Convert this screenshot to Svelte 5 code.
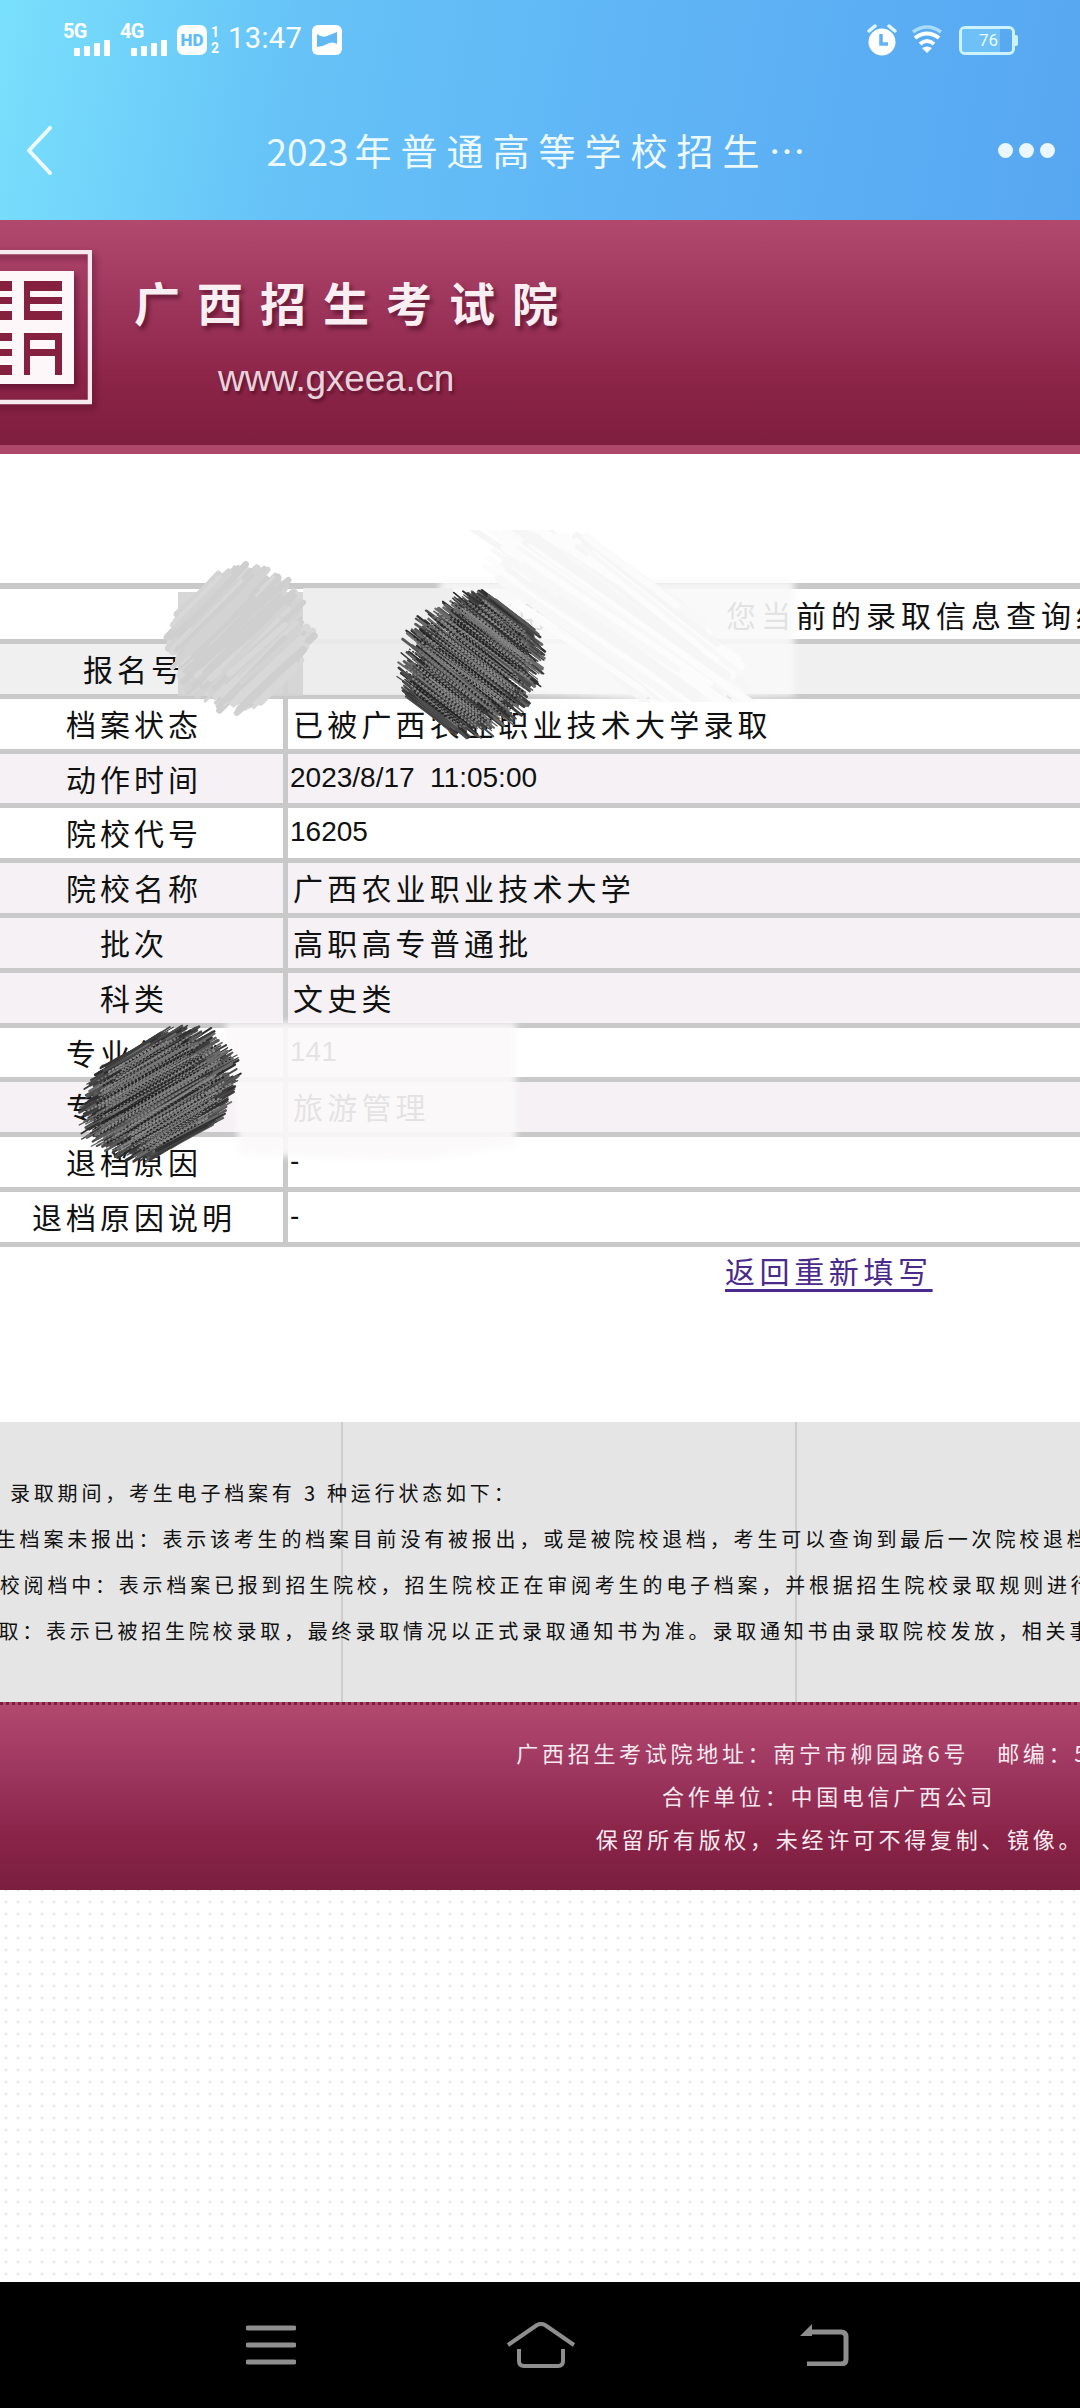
<script>
  const rows = [
    { label: '报名号', value: '', tint: 'grey' },
    { label: '档案状态', value: '已被广西农业职业技术大学录取' },
    { label: '动作时间', value: '2023/8/17  11:05:00', num: true, tint: 'pink' },
    { label: '院校代号', value: '16205', num: true },
    { label: '院校名称', value: '广西农业职业技术大学', tint: 'pink' },
    { label: '批次', value: '高职高专普通批', tint: 'pink' },
    { label: '科类', value: '文史类', tint: 'pink' },
    { label: '专业代号', value: '141', num: true },
    { label: '专业名称', value: '旅游管理', tint: 'pink' },
    { label: '退档原因', value: '-', num: true },
    { label: '退档原因说明', value: '-', num: true }
  ];

  const notes = [
    { cls: 'n1', text: '录取期间，考生电子档案有 3 种运行状态如下：' },
    { cls: 'n2', text: '考生档案未报出：表示该考生的档案目前没有被报出，或是被院校退档，考生可以查询到最后一次院校退档' },
    { cls: 'n3', text: '院校阅档中：表示档案已报到招生院校，招生院校正在审阅考生的电子档案，并根据招生院校录取规则进行' },
    { cls: 'n4', text: '院校录取：表示已被招生院校录取，最终录取情况以正式录取通知书为准。录取通知书由录取院校发放，相关事宜' }
  ];

  // pen marks that hide personal data on the original
  function scribble({ cx, cy, angle, len, spread, count, seed, colors, minW, maxW, dash = '' }) {
    let s = seed;
    const rnd = () => {
      s = (s + 0x6d2b79f5) | 0;
      let t = Math.imul(s ^ (s >>> 15), 1 | s);
      t = (t + Math.imul(t ^ (t >>> 7), 61 | t)) ^ t;
      return ((t ^ (t >>> 14)) >>> 0) / 4294967296;
    };
    const a = (angle * Math.PI) / 180;
    const out = [];
    for (let i = 0; i < count; i++) {
      const k = rnd() * 2 - 1;
      const half = len * Math.sqrt(1 - k * k * 0.8) * (0.55 + rnd() * 0.5);
      const shift = (rnd() - 0.5) * len * 0.3;
      const tilt = a + (rnd() - 0.5) * 0.1;
      const mx = cx - Math.sin(a) * spread * k + Math.cos(a) * shift;
      const my = cy + Math.cos(a) * spread * k + Math.sin(a) * shift;
      out.push({
        x1: mx - Math.cos(tilt) * half,
        y1: my - Math.sin(tilt) * half,
        x2: mx + Math.cos(tilt) * half,
        y2: my + Math.sin(tilt) * half,
        w: minW + rnd() * (maxW - minW),
        c: colors[Math.floor(rnd() * colors.length)],
        dash
      });
    }
    return out;
  }

  const dark = ['#2f2f2f', '#3d3d3d', '#4c4c4c', '#5a5a5a', '#6a6a6a'];
  const grain = ['#8c8c8c', '#777777', '#222222'];
  const greys = ['#cfcfcf', '#d3d3d3', '#d8d8d8'];
  const pale = ['#fbfbfb', '#fcfcfc', '#f8f8f8', '#f6f6f6'];

  const paleMarks = scribble({ cx: 620, cy: 622, angle: 36, len: 150, spread: 48, count: 110, seed: 5, colors: pale, minW: 4, maxW: 10 });

  const marks = [
    ...scribble({ cx: 240, cy: 638, angle: -44, len: 66, spread: 60, count: 240, seed: 11, colors: greys, minW: 3, maxW: 8 }),
    ...scribble({ cx: 472, cy: 664, angle: 38, len: 62, spread: 66, count: 520, seed: 23, colors: dark, minW: 1, maxW: 3 }),
    ...scribble({ cx: 472, cy: 664, angle: 38, len: 56, spread: 58, count: 200, seed: 29, colors: grain, minW: 1, maxW: 2, dash: '1 3' }),
    ...scribble({ cx: 160, cy: 1094, angle: -30, len: 76, spread: 52, count: 560, seed: 37, colors: dark, minW: 1, maxW: 3 }),
    ...scribble({ cx: 160, cy: 1094, angle: -30, len: 68, spread: 45, count: 200, seed: 41, colors: grain, minW: 1, maxW: 2, dash: '1 3' })
  ];
</script>

<div class="screen">
  <header class="top">
    <div class="status">
      <div class="sig">
        <span class="net">5G</span>
        <svg width="36" height="16" viewBox="0 0 36 16"><rect x="0" y="8" width="6" height="8" rx="1" /><rect x="10" y="6" width="6" height="10" rx="1" /><rect x="20" y="3" width="6" height="13" rx="1" /><rect x="30" y="0" width="6" height="16" rx="1" /></svg>
      </div>
      <div class="sig">
        <span class="net">4G</span>
        <svg width="36" height="16" viewBox="0 0 36 16"><rect x="0" y="8" width="6" height="8" rx="1" /><rect x="10" y="6" width="6" height="10" rx="1" /><rect x="20" y="3" width="6" height="13" rx="1" /><rect x="30" y="0" width="6" height="16" rx="1" /></svg>
      </div>
      <span class="hd">HD</span>
      <span class="sims"><b>1</b><b>2</b></span>
      <span class="clock">13:47</span>
      <svg class="msg" width="30" height="30" viewBox="0 0 30 30">
        <rect width="30" height="30" rx="6" fill="#fff" />
        <path d="M5 9 Q10 13 15 11 T25 7 V19 Q20 16 15 19 T5 22 Z" fill="#62b8f4" />
      </svg>
      <div class="status-right">
        <svg width="30" height="32" viewBox="0 0 30 32">
          <circle cx="15" cy="18" r="13.5" fill="#fff" />
          <path d="M2 7 L8 2 M28 7 L22 2" stroke="#dff6ff" stroke-width="3.5" stroke-linecap="round" />
          <path d="M14 10 V20 H21" fill="none" stroke="#5fb2f4" stroke-width="3.5" />
        </svg>
        <svg width="32" height="30" viewBox="0 0 32 30" fill="none" stroke-linecap="butt">
          <path d="M2 7 Q16 -3 30 7" stroke="#a9dcfb" stroke-width="3.5" />
          <path d="M4 13 Q16 4 28 13" stroke="#fff" stroke-width="4" />
          <path d="M9 19 Q16 13 23 19" stroke="#fff" stroke-width="4" />
          <path d="M16 28 L11 23 Q16 20 21 23 Z" fill="#fff" />
        </svg>
        <div class="batt">
          <div class="batt-box"><div class="batt-fill"></div><span>76</span></div>
          <div class="batt-nub"></div>
        </div>
      </div>
    </div>
    <div class="nav">
      <svg class="back" width="27" height="49" viewBox="0 0 27 49"><path d="M24 2 L3 24.5 L24 47" fill="none" stroke="#eefbff" stroke-width="4" stroke-linecap="round" stroke-linejoin="round" /></svg>
      <h1 class="title"><span class="digits">2023</span>年普通高等学校招生…</h1>
      <div class="dots"><i></i><i></i><i></i></div>
    </div>
  </header>

  <div class="site">
    <div class="banner">
      <svg class="logo" width="106" height="156" viewBox="0 0 106 156">
        <path d="M0 2 H104 V152 H0" fill="none" stroke="#f6e9ee" stroke-width="4.5" />
        <rect x="0" y="21" width="88" height="113" fill="#fdf7f9" />
        <path d="M38 31 H76 V41 H44 V47 H76 V54 H44 V61 H76 V70 H38 Z" fill="#85213f" />
        <path d="M38 83 H76 V125 H69 V106 H44 V125 H38 Z M44 90 V99 H69 V90 Z" fill="#85213f" fill-rule="evenodd" />
        <path d="M0 31 H26 V41 H6 V47 H26 V54 H6 V61 H26 V70 H0 Z M0 83 H26 V91 H0 Z M0 99 H26 V106 H0 Z M0 115 H26 V125 H0 Z" fill="#85213f" />
      </svg>
      <div class="brand">
        <div class="brand-name">广西招生考试院</div>
        <div class="brand-url">www.gxeea.cn</div>
      </div>
    </div>

    <div class="table">
      <div class="notice">用户，您好，您当前的录取信息查询结果如下</div>
      {#each rows as row}
        <div class="row {row.tint ?? ''}">
          <div class="label">{row.label}</div>
          <div class="value" class:num={row.num}>{row.value}</div>
        </div>
      {/each}
    </div>

    <div class="again"><span class="link">返回重新填写</span></div>

    <div class="notes">
      {#each notes as note}
        <p class={note.cls}>{note.text}</p>
      {/each}
    </div>

    <footer class="foot">
      <p class="f1">广西招生考试院地址：南宁市柳园路6号<span class="gap"></span>邮编：530022</p>
      <p>合作单位：中国电信广西公司</p>
      <p class="f3">保留所有版权，未经许可不得复制、镜像。</p>
    </footer>

    <div class="pattern"></div>
  </div>

  <div class="navbar">
    <svg width="50" height="40" viewBox="0 0 50 40"><path d="M2 3 H48 M2 20 H48 M2 37 H48" stroke="#8e8e8e" stroke-width="5" stroke-linecap="round" /></svg>
    <svg width="70" height="46" viewBox="0 0 70 46" fill="none" stroke="#8e8e8e" stroke-width="4">
      <path d="M2 23 L31 3 Q35 1 39 3 L68 23" stroke-linejoin="round" />
      <path d="M13 27 V39 Q13 44 18 44 H52 Q57 44 57 39 V27" />
    </svg>
    <svg class="nav-back" width="50" height="42" viewBox="0 0 50 42" fill="none" stroke="#8e8e8e" stroke-width="5">
      <path d="M12 8 H42 Q47 8 47 13 V35 Q47 40 42 40 H8" />
      <path d="M13 0 V12 H1 Z" fill="#8e8e8e" stroke="none" />
    </svg>
  </div>

  <svg class="marks" width="1080" height="2408" viewBox="0 0 1080 2408">
    <defs>
      <clipPath id="pale-clip"><rect x="303" y="530" width="490" height="172" /></clipPath>
    </defs>
    <!-- erased strokes around the first redaction -->
    <polygon class="soft" points="440,580 794,580 794,696 640,700 520,692 430,698" fill="#f9f9f9" opacity="0.9" />
    <g clip-path="url(#pale-clip)">
      {#each paleMarks as m}
        <line x1={m.x1} y1={m.y1} x2={m.x2} y2={m.y2} stroke={m.c} stroke-width={m.w} stroke-linecap="round" />
      {/each}
    </g>
    <rect x="303" y="588" width="150" height="107" fill="#ececec" opacity="0.9" />
    <rect x="178" y="592" width="125" height="104" fill="#d3d3d3" opacity="0.9" />
    <!-- erased strokes on the second one -->
    <polygon class="soft" points="225,1022 516,1022 516,1145 420,1160 240,1155" fill="#fbf9fa" opacity="0.9" />
    {#each marks as m}
      <line x1={m.x1} y1={m.y1} x2={m.x2} y2={m.y2} stroke={m.c} stroke-width={m.w} stroke-dasharray={m.dash} stroke-linecap="round" />
    {/each}
  </svg>
</div>

<style>
  :global(body) {
    margin: 0;
    background: #fff;
  }

  .screen {
    position: relative;
    width: 1080px;
    height: 2408px;
    overflow: hidden;
    display: flex;
    flex-direction: column;
    font-family: "Noto Sans CJK SC", "Noto Sans", sans-serif;
    color: #111;
  }

  /* phone chrome */
  .top {
    height: 220px;
    flex: none;
    background: linear-gradient(100deg, #79e0fc 0%, #66c2f7 28%, #5fb4f5 60%, #56a7f1 100%);
    color: #fff;
  }

  .status {
    height: 80px;
    display: flex;
    align-items: center;
    padding: 0 62px 0 63px;
  }

  .sig {
    width: 57px;
    height: 32px;
    display: flex;
    flex-direction: column;
    align-items: flex-end;
    position: relative;
    justify-content: flex-end;
  }

  .sig svg {
    fill: #fff;
    margin-right: 10px;
  }

  .net {
    position: absolute;
    left: 0;
    top: -3px;
    font: 700 20px/20px Roboto, sans-serif;
    letter-spacing: -0.8px;
  }

  .hd {
    width: 30px;
    height: 30px;
    background: #fff;
    color: #5fbcf5;
    border-radius: 7px;
    font: 900 17px/30px Roboto, sans-serif;
    text-align: center;
  }

  .sims {
    display: flex;
    flex-direction: column;
    justify-content: space-between;
    height: 30px;
    margin: 0 9px 0 4px;
  }

  .sims b {
    font: 700 14px/14px Roboto, sans-serif;
  }

  .clock {
    font: 400 29px/30px Roboto, sans-serif;
    letter-spacing: 0.4px;
    margin: -5px 10px 0 0;
  }

  .status-right {
    margin-left: auto;
    display: flex;
    align-items: center;
    gap: 14px;
  }

  .batt {
    display: flex;
    align-items: center;
    margin-left: 2px;
  }

  .batt-box {
    position: relative;
    width: 56px;
    height: 29px;
    box-sizing: border-box;
    border: 3px solid #ccf3fc;
    border-radius: 6px;
    overflow: hidden;
    background: #59a9f0;
  }

  .batt-fill {
    width: 76%;
    height: 100%;
    background: #70c0f8;
  }

  .batt-box span {
    position: absolute;
    left: 17px;
    top: 1px;
    font: 400 17px/21px Roboto, sans-serif;
    color: #e8fbff;
  }

  .batt-nub {
    width: 3px;
    height: 11px;
    background: #ccf3fc;
    border-radius: 0 2px 2px 0;
  }

  .nav {
    height: 140px;
    display: grid;
    grid-template-columns: 1fr auto 1fr;
    align-items: center;
    padding: 0 25px 0 26px;
  }

  .title {
    margin: 0;
    font-size: 37px;
    font-weight: 400;
    letter-spacing: 9px;
    color: #ecf9ff;
    white-space: nowrap;
  }

  .digits {
    letter-spacing: 0;
    margin-right: 6px;
  }

  .dots {
    justify-self: end;
    display: flex;
    gap: 6px;
  }

  .dots i {
    width: 15px;
    height: 15px;
    border-radius: 50%;
    background: #eaf7fe;
  }

  /* the scrolled web page */
  .site {
    flex: 1;
    width: 1690px;
    margin-left: -16px;
    display: flex;
    flex-direction: column;
    min-height: 0;
  }

  .banner {
    position: relative;
    height: 225px;
    flex: none;
    padding-left: 150px;
    background: linear-gradient(180deg, #b1486d 0%, #a23a60 30%, #8c2548 70%, #7f1e3f 100%);
    border-bottom: 9px solid #ae486b;
  }

  .logo {
    position: absolute;
    left: 2px;
    top: 30px;
    filter: drop-shadow(3px 4px 3px rgba(60, 0, 25, 0.45));
  }

  .brand-name {
    padding-top: 49px;
    font-size: 46px;
    line-height: 64px;
    font-weight: 700;
    letter-spacing: 17px;
    color: #f9eff3;
    text-shadow: 3px 4px 4px rgba(60, 0, 25, 0.55);
  }

  .brand-url {
    margin: 26px 0 0 84px;
    font: 400 37px/40px "Liberation Sans", Arial, sans-serif;
    letter-spacing: -0.2px;
    color: #e6d3db;
    text-shadow: 2px 3px 3px rgba(60, 0, 25, 0.5);
  }

  .table {
    margin-top: 129px;
    flex: none;
  }

  .notice {
    height: 50px;
    border-top: 6px solid #c9c9c9;
    border-bottom: 5px solid #c9c9c9;
    padding-left: 532px;
    font-size: 30px;
    line-height: 50px;
    letter-spacing: 5px;
    white-space: nowrap;
  }

  .row {
    display: flex;
    height: 54.8px;
    box-sizing: border-box;
    border-bottom: 5px solid #c9c9c9;
  }

  .row.pink {
    background: #f5f1f4;
  }

  .row.grey {
    background: #f0f0f0;
  }

  .label {
    width: 304px;
    flex: none;
    box-sizing: border-box;
    border-right: 5px solid #c9c9c9;
    padding-left: 1px;
    text-align: center;
    font-size: 30px;
    line-height: 48px;
    letter-spacing: 4px;
  }

  .value {
    padding-left: 5px;
    font-size: 30px;
    line-height: 48px;
    letter-spacing: 4.2px;
    white-space: pre;
  }

  .value.num {
    padding-left: 2px;
    font-family: "Liberation Sans", Arial, sans-serif;
    font-size: 28px;
    letter-spacing: 0;
  }

  .again {
    height: 175.2px;
    flex: none;
    padding: 0 0 0 741px;
  }

  .link {
    font-size: 30px;
    line-height: 46px;
    letter-spacing: 4.6px;
    color: #4a2b8c;
    text-decoration: underline;
    text-decoration-thickness: 3px;
    text-underline-offset: 6px;
  }

  .notes {
    height: 280px;
    flex: none;
    box-sizing: border-box;
    padding-top: 48px;
    background-color: #e5e5e5;
    background-image: linear-gradient(#cdcdcd, #cdcdcd), linear-gradient(#cdcdcd, #cdcdcd);
    background-size: 2px 100%, 2px 100%;
    background-position: 357px 0, 811px 0;
    background-repeat: no-repeat;
  }

  .notes p {
    margin: 0;
    font-size: 20px;
    line-height: 46px;
    letter-spacing: 3.8px;
    white-space: nowrap;
  }

  .notes .n1 { margin-left: 26px; }
  .notes .n2 { margin-left: -12px; }
  .notes .n3 { margin-left: -8px; }
  .notes .n4 { margin-left: -57px; }

  .foot {
    height: 188px;
    flex: none;
    box-sizing: border-box;
    padding-top: 26px;
    border-top: 3px dotted #b0486d;
    background: linear-gradient(180deg, #b1486d 0%, #9e3760 35%, #8a2448 70%, #7a1e3f 100%);
    text-align: center;
    color: #f8eaf0;
  }

  .foot p {
    margin: 0;
    font-size: 22px;
    line-height: 43px;
    letter-spacing: 3.7px;
    white-space: nowrap;
  }

  .foot .f1 { padding-left: 28px; }
  .foot .f3 { padding-left: 22px; }

  .gap {
    display: inline-block;
    width: 28px;
  }

  .pattern {
    flex: 1;
    min-height: 0;
    background-color: #fff;
    background-image: radial-gradient(circle, #e9e9e9 0, #e9e9e9 1.3px, transparent 1.8px);
    background-size: 12px 12px;
    background-position: 16px 6px;
  }

  .navbar {
    height: 126px;
    flex: none;
    background: #000;
    display: flex;
    align-items: center;
    gap: 210px;
    padding-left: 246px;
  }

  .nav-back {
    margin-left: 13px;
  }

  /* redaction scribbles sit on top of the page */
  .marks {
    position: absolute;
    left: 0;
    top: 0;
    pointer-events: none;
  }

  .soft {
    filter: blur(3px);
  }
</style>
